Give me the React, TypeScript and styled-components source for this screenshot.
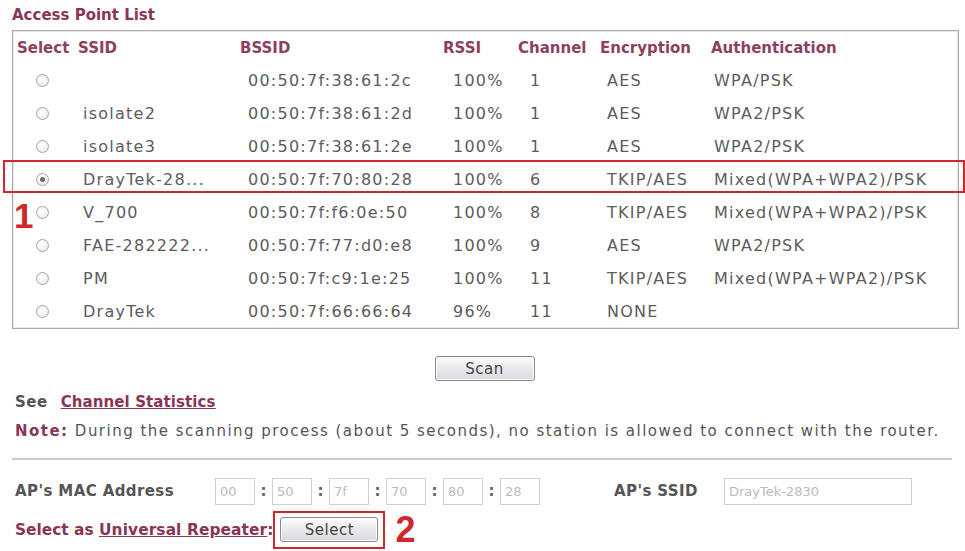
import React from "react";
import styled, { createGlobalStyle } from "styled-components";

const GlobalStyle = createGlobalStyle`
  html, body {
    margin: 0;
    padding: 0;
    background: #fff;
  }
  body {
    font-family: "DejaVu Sans", Verdana, sans-serif;
    color: #555;
  }
`;

const MAROON = "#8a3558";
const RED = "#cf272d";

type AP = {
    ssid: string;
    bssid: string;
    rssi: string;
    channel: string;
    enc: string;
    auth: string;
};

const accessPoints: AP[] = [
    { ssid: "", bssid: "00:50:7f:38:61:2c", rssi: "100%", channel: "1", enc: "AES", auth: "WPA/PSK" },
    { ssid: "isolate2", bssid: "00:50:7f:38:61:2d", rssi: "100%", channel: "1", enc: "AES", auth: "WPA2/PSK" },
    { ssid: "isolate3", bssid: "00:50:7f:38:61:2e", rssi: "100%", channel: "1", enc: "AES", auth: "WPA2/PSK" },
    { ssid: "DrayTek-28...", bssid: "00:50:7f:70:80:28", rssi: "100%", channel: "6", enc: "TKIP/AES", auth: "Mixed(WPA+WPA2)/PSK" },
    { ssid: "V_700", bssid: "00:50:7f:f6:0e:50", rssi: "100%", channel: "8", enc: "TKIP/AES", auth: "Mixed(WPA+WPA2)/PSK" },
    { ssid: "FAE-282222...", bssid: "00:50:7f:77:d0:e8", rssi: "100%", channel: "9", enc: "AES", auth: "WPA2/PSK" },
    { ssid: "PM", bssid: "00:50:7f:c9:1e:25", rssi: "100%", channel: "11", enc: "TKIP/AES", auth: "Mixed(WPA+WPA2)/PSK" },
    { ssid: "DrayTek", bssid: "00:50:7f:66:66:64", rssi: "96%", channel: "11", enc: "NONE", auth: "" },
];

const SELECTED = 3;
const MAC = ["00", "50", "7f", "70", "80", "28"];

// column widths, header text sits on the column edge, data is nudged in a bit
const COLS = "65px 162px 203px 75px 82px 111px 1fr";
const DATA_PAD = [0, 5, 8, 10, 12, 7, 3];

const Page = styled.div`
    width: 965px;
    height: 551px;
    padding: 6px 8px 0 12px;
    box-sizing: border-box;
    position: relative;
`;

const Title = styled.div`
    font-size: 15px;
    font-weight: bold;
    color: ${MAROON};
    height: 18px;
    line-height: 18px;
    margin-bottom: 6px;
`;

const ListBox = styled.div`
    width: 945px;
    border: 1px solid #aaa;
    box-shadow: inset 0 0 0 1px #e8e8e8;
    position: relative;
`;

const Row = styled.div`
    display: grid;
    grid-template-columns: ${COLS};
    height: 33px;
    align-items: center;
`;

const HeadCell = styled.div<{ $pad?: number }>`
    font-size: 15px;
    font-weight: bold;
    color: #8d3f62;
    padding-left: ${p => p.$pad ?? 0}px;
    white-space: nowrap;
`;

const Cell = styled.div<{ $pad: number }>`
    font-size: 16px;
    letter-spacing: 1.25px;
    color: #5c5c5c;
    padding-left: ${p => p.$pad}px;
    white-space: nowrap;
`;

const RadioWrap = styled.div`
    display: flex;
    justify-content: flex-start;
    padding-left: 23px;
`;

const Radio = styled.span<{ $on?: boolean }>`
    width: 13px;
    height: 13px;
    border-radius: 50%;
    border: 1px solid #a4a4a4;
    background: radial-gradient(circle at 40% 35%, #fff, #e8e8e8);
    box-sizing: border-box;
    display: flex;
    align-items: center;
    justify-content: center;
    &::after {
        content: "";
        width: 5px;
        height: 5px;
        border-radius: 50%;
        background: ${p => (p.$on ? "#6a6a6a" : "transparent")};
    }
`;

// red marker frame drawn over the chosen row
const Highlight = styled.div`
    position: absolute;
    left: -10px;
    right: -7px;
    top: 129px;
    height: 29px;
    border: 2px solid ${RED};
    pointer-events: none;
`;

const Marker = styled.span<{ $size: number }>`
    position: absolute;
    font-family: "Liberation Sans", Arial, sans-serif;
    font-weight: bold;
    font-size: ${p => p.$size}px;
    color: ${RED};
    line-height: 1;
`;

const ScanRow = styled.div`
    display: flex;
    justify-content: center;
    margin-top: 27px;
    width: 945px;
`;

const Button = styled.button<{ $w: number }>`
    width: ${p => p.$w}px;
    height: 25px;
    border: 1px solid #8a8a8a;
    border-radius: 3px;
    background: linear-gradient(#fdfdfd, #e9e9ec 50%, #d9dae0);
    box-shadow: inset 0 0 0 1px #fff;
    font-family: "DejaVu Sans", Verdana, sans-serif;
    font-size: 15px;
    letter-spacing: 0.5px;
    color: #444;
    padding: 0;
    cursor: pointer;
`;

const Line = styled.div<{ $top: number }>`
    margin-top: ${p => p.$top}px;
    font-size: 15px;
    letter-spacing: 1.48px;
    color: #555;
    white-space: nowrap;
    line-height: 18px;
    padding-left: 3px;
`;

const Strong = styled.span<{ $gap?: number }>`
    font-weight: bold;
    color: ${MAROON};
    margin-right: ${p => p.$gap ?? 0}px;
`;

const Plain = styled.span<{ $gap: number }>`
    font-weight: bold;
    letter-spacing: 0.5px;
    margin-right: ${p => p.$gap}px;
`;

const Link = styled.a`
    color: ${MAROON};
    font-weight: bold;
    letter-spacing: 0.1px;
    text-decoration: underline;
    cursor: pointer;
`;

const Rule = styled.hr`
    width: 940px;
    margin: 18px 0 0 0;
    border: 0;
    border-top: 2px solid #c9c9c9;
`;

const FormRow = styled.div<{ $top: number }>`
    display: flex;
    align-items: center;
    margin-top: ${p => p.$top}px;
    padding-left: 3px;
    min-height: 28px;
    font-size: 15.4px;
`;

const Label = styled.span<{ $w: number }>`
    width: ${p => p.$w}px;
    font-size: 15px;
    font-weight: bold;
    letter-spacing: 0.4px;
    color: #555;
    white-space: nowrap;
`;

const Field = styled.input<{ $w: number }>`
    width: ${p => p.$w}px;
    height: 27px;
    box-sizing: border-box;
    border: 1px solid #cfcfcf;
    background: #fff;
    color: #bbb;
    font-family: "DejaVu Sans", Verdana, sans-serif;
    font-size: 13px;
    padding: 0 4px;
    outline: none;
`;

const Colon = styled.span`
    width: 17px;
    text-align: center;
    font-weight: bold;
    color: #666;
    font-size: 15px;
`;

const SelectFrame = styled.span`
    position: relative;
    display: inline-flex;
    padding: 4px 5px 5px;
    border: 2px solid ${RED};
`;

export default function App() {
    return (
        <Page>
            <GlobalStyle />
            <Title>Access Point List</Title>
            <ListBox>
                <Row>
                    <HeadCell $pad={4}>Select</HeadCell>
                    <HeadCell>SSID</HeadCell>
                    <HeadCell>BSSID</HeadCell>
                    <HeadCell>RSSI</HeadCell>
                    <HeadCell>Channel</HeadCell>
                    <HeadCell>Encryption</HeadCell>
                    <HeadCell>Authentication</HeadCell>
                </Row>
                {accessPoints.map((ap, i) => (
                    <Row key={ap.bssid}>
                        <RadioWrap>
                            <Radio $on={i === SELECTED} />
                        </RadioWrap>
                        <Cell $pad={DATA_PAD[1]}>{ap.ssid}</Cell>
                        <Cell $pad={DATA_PAD[2]}>{ap.bssid}</Cell>
                        <Cell $pad={DATA_PAD[3]}>{ap.rssi}</Cell>
                        <Cell $pad={DATA_PAD[4]}>{ap.channel}</Cell>
                        <Cell $pad={DATA_PAD[5]}>{ap.enc}</Cell>
                        <Cell $pad={DATA_PAD[6]}>{ap.auth}</Cell>
                    </Row>
                ))}
                <Highlight />
                <Marker $size={35} style={{ left: 1, top: 167 }}>1</Marker>
            </ListBox>

            <ScanRow>
                <Button $w={100}>Scan</Button>
            </ScanRow>

            <Line $top={12}>
                <Plain $gap={13}>See</Plain>
                <Link>Channel Statistics</Link>
            </Line>
            <Line $top={11}>
                <Strong>Note:</Strong> During the scanning process (about 5 seconds), no station is allowed to connect with the router.
            </Line>

            <Rule />

            <FormRow $top={17}>
                <Label $w={200}>AP's MAC Address</Label>
                {MAC.map((m, i) => (
                    <React.Fragment key={i}>
                        {i > 0 && <Colon>:</Colon>}
                        <Field $w={40} value={m} readOnly />
                    </React.Fragment>
                ))}
                <Label $w={110} style={{ marginLeft: 74 }}>AP's SSID</Label>
                <Field $w={188} value="DrayTek-2830" readOnly />
            </FormRow>

            <FormRow $top={6}>
                <Strong>Select as&nbsp;</Strong>
                <Link>Universal Repeater</Link>
                <Strong>:</Strong>
                <SelectFrame>
                    <Button $w={98}>Select</Button>
                    <Marker $size={36} style={{ left: 120, top: -1 }}>2</Marker>
                </SelectFrame>
            </FormRow>
        </Page>
    );
}
